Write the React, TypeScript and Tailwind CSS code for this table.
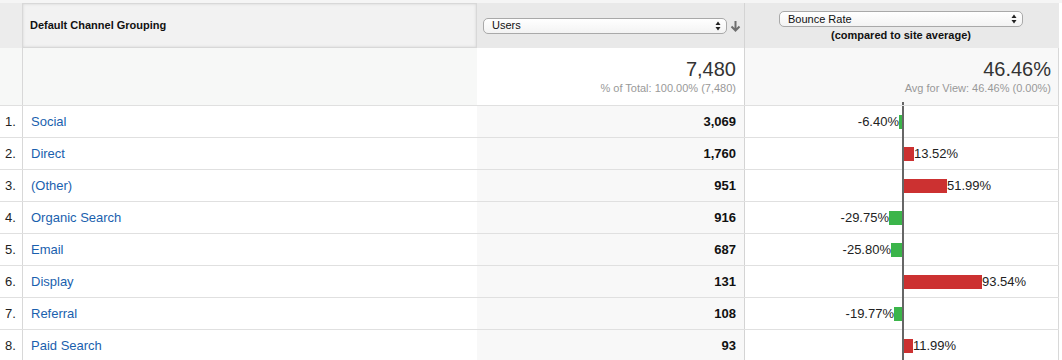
const rows = [
  { n: 1, name: "Social", users: "3,069", rate: "-6.40%", bar: 3, neg: true },
  { n: 2, name: "Direct", users: "1,760", rate: "13.52%", bar: 10, neg: false },
  { n: 3, name: "(Other)", users: "951", rate: "51.99%", bar: 43, neg: false },
  { n: 4, name: "Organic Search", users: "916", rate: "-29.75%", bar: 13, neg: true },
  { n: 5, name: "Email", users: "687", rate: "-25.80%", bar: 11, neg: true },
  { n: 6, name: "Display", users: "131", rate: "93.54%", bar: 78, neg: false },
  { n: 7, name: "Referral", users: "108", rate: "-19.77%", bar: 8, neg: true },
  { n: 8, name: "Paid Search", users: "93", rate: "11.99%", bar: 9, neg: false },
];

function SelectArrows() {
  return (
    <svg width="6" height="10" viewBox="0 0 6 10" className="shrink-0">
      <path d="M3 0.5 L5.5 4 H0.5 Z" fill="#222" />
      <path d="M3 9.5 L5.5 6 H0.5 Z" fill="#222" />
    </svg>
  );
}

function FakeSelect({ label }: { label: string }) {
  return (
    <div className="flex h-4 w-[244px] items-center justify-between rounded-[5px] border border-[#a9a9a9] bg-gradient-to-b from-white to-[#f3f3f3] pl-[8px] pr-[5px] text-[11px] leading-none text-[#111]">
      <span>{label}</span>
      <SelectArrows />
    </div>
  );
}

export default function App() {
  return (
    <div
      className="w-[1062px] h-[360px] overflow-hidden bg-white text-[#222]"
      style={{ fontFamily: '"Liberation Sans", Arial, sans-serif' }}
    >
      <div className="h-[3px] bg-[#f5f5f5]" />
      {/* header */}
      <div className="grid h-[45px] w-[1059px] grid-cols-[22px_455px_268px_314px] bg-[#e9e9e9]">
        <div className="bg-[#ececec]" />
        <div className="flex items-center border border-[#d8d8d8] bg-[#f2f2f2] pl-[7px] text-[11px] font-bold text-[#111] shadow-[inset_0_0_3px_rgba(0,0,0,0.12)]">
          Default Channel Grouping
        </div>
        <div className="flex items-center gap-[3px] border-r border-[#d4d4d4] pl-[6px]">
          <FakeSelect label="Users" />
          <svg width="11" height="12" viewBox="0 0 11 12">
            <path d="M5.5 1 V10 M1.5 6.5 L5.5 10.5 L9.5 6.5" stroke="#6f6f6f" strokeWidth="2" fill="none" />
          </svg>
        </div>
        <div className="flex flex-col items-start pl-[34px] pt-[8px]">
          <FakeSelect label="Bounce Rate" />
          <div className="mt-[1px] w-[244px] text-center text-[11px] font-bold leading-[14px] text-[#111]">
            (compared to site average)
          </div>
        </div>
      </div>
      {/* totals */}
      <div className="grid h-[58px] w-[1059px] grid-cols-[22px_455px_268px_314px] border-b border-[#e0e0e0]">
        <div className="bg-[#f7f8f7]" />
        <div className="border-l border-[#d8d8d8] bg-[#f7f8f7]" />
        <div className="flex flex-col items-end border-r border-[#d4d4d4] bg-white pr-[8px] pt-[9px]">
          <div className="text-[20px] leading-[24px] text-[#333]">7,480</div>
          <div className="text-[11px] leading-[14px] text-[#999]">% of Total: 100.00% (7,480)</div>
        </div>
        <div className="relative flex flex-col items-end border-r border-[#d8d8d8] bg-[#f8f8f8] pr-[7px] pt-[9px]">
          <div className="text-[20px] leading-[24px] text-[#333]">46.46%</div>
          <div className="text-[11px] leading-[14px] text-[#999]">Avg for View: 46.46% (0.00%)</div>
          <div className="absolute bottom-0 left-[157px] h-[3px] w-[2px] bg-[#666]" />
        </div>
      </div>
      {/* rows */}
      {rows.map((r) => (
        <div
          key={r.n}
          className="grid h-[32px] w-[1059px] grid-cols-[22px_455px_268px_314px] border-b border-[#e0e0e0] text-[13px]"
        >
          <div className="flex items-center pl-[5px] text-[#222]">{r.n}.</div>
          <div className="flex items-center border-l border-[#d8d8d8] pl-[8px] text-[#1a5fae]">{r.name}</div>
          <div className="flex items-center justify-end border-r border-[#d4d4d4] bg-[#f8f8f8] pr-[8px] font-bold text-[#111]">
            {r.users}
          </div>
          <div className="relative flex items-center border-r border-[#d8d8d8]">
            <div className="flex w-[157px] items-center justify-end">
              {r.neg && (
                <>
                  <span>{r.rate}</span>
                  <div className="h-[14px] bg-[#3bb54a]" style={{ width: r.bar }} />
                </>
              )}
            </div>
            <div className="w-[2px]" />
            <div className="flex items-center">
              {!r.neg && (
                <>
                  <div className="h-[14px] bg-[#cc3131]" style={{ width: r.bar }} />
                  <span>{r.rate}</span>
                </>
              )}
            </div>
            <div className="absolute top-0 -bottom-px left-[157px] w-[2px] bg-[#666]" />
          </div>
        </div>
      ))}
    </div>
  );
}
